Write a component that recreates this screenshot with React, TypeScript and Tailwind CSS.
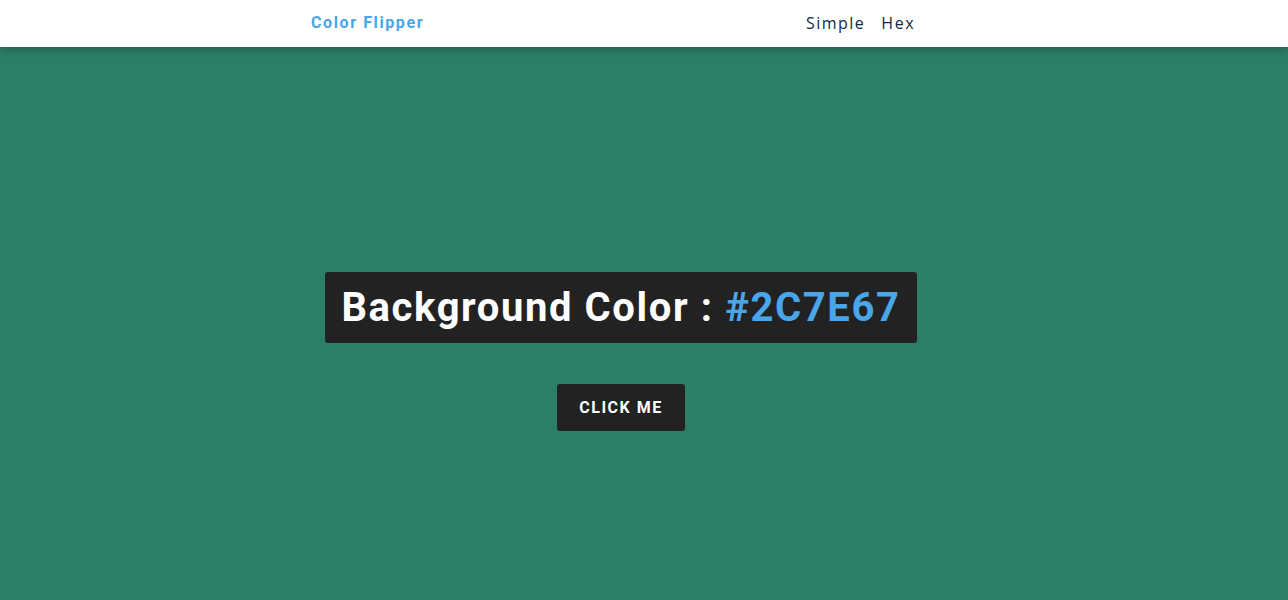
import { useState } from "react";

const hex = ["0", "1", "2", "3", "4", "5", "6", "7", "8", "9", "A", "B", "C", "D", "E", "F"];

export default function App() {
  const [color, setColor] = useState("#2C7E67");

  const flip = () => {
    let next = "#";
    for (let i = 0; i < 6; i++) next += hex[Math.floor(Math.random() * hex.length)];
    setColor(next);
  };

  return (
    <div className="min-h-[600px]" style={{ backgroundColor: color }}>
      {/* ── Nav ── */}
      <nav className="relative z-10 h-[47px] bg-white shadow-[0_4px_8px_rgba(0,0,0,0.2)]">
        <div className="ml-[311px] flex h-full w-[604px] items-center justify-between">
          <h4 className="pb-[2px] font-['Roboto',sans-serif] text-[16px] font-bold tracking-[1.6px] text-[#49a6e9]">
            Color Flipper
          </h4>
          <ul className="flex items-center gap-[16px] pb-[1px] font-['Open_Sans',sans-serif] text-[16px] font-medium tracking-[1.5px] text-[#102a42]">
            <li>
              <a href="#">Simple</a>
            </li>
            <li>
              <a href="#">Hex</a>
            </li>
          </ul>
        </div>
      </nav>

      {/* ── Main ── */}
      <main className="flex flex-col items-center pr-[46px] pt-[225px] font-['Roboto',sans-serif]">
        <h2 className="rounded-[3px] bg-[#222222] px-[16px] py-[12px] text-[40px] font-bold leading-[47px] tracking-[1.6px] text-white">
          Background Color : <span className="text-[#49a6e9]">{color}</span>
        </h2>
        <button
          onClick={flip}
          className="mt-[41px] h-[47px] w-[128px] rounded-[3px] bg-[#222222] text-[16px] font-bold uppercase tracking-[1.5px] text-white"
        >
          Click Me
        </button>
      </main>
    </div>
  );
}
